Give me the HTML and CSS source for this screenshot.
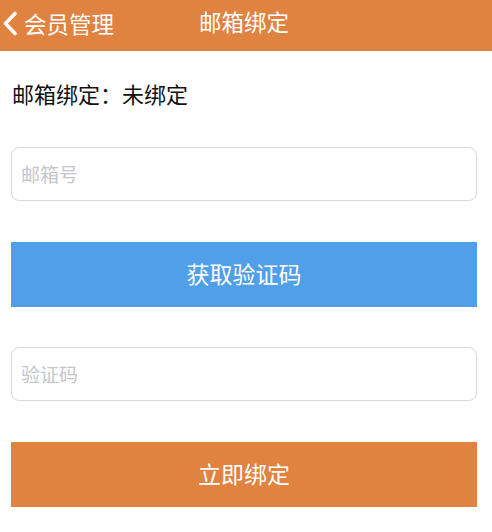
FILE: index.html
```html
<!DOCTYPE html>
<html lang="zh-CN">
<head>
<meta charset="utf-8">
<link rel="stylesheet" href="styles.css">
</head>
<body>
<header class="topbar">
  <a class="back">
    <svg class="back-icon" width="16" height="25" viewBox="0 0 16 25"><path d="M13 2.5 L3.5 12.5 L13 22.5" fill="none" stroke="#fff" stroke-width="3.6" stroke-linecap="round" stroke-linejoin="round"/></svg>
    <span>会员管理</span>
  </a>
  <h1 class="title">邮箱绑定</h1>
</header>
<main class="content">
  <p class="status">邮箱绑定：未绑定</p>
  <input class="field" type="text" placeholder="邮箱号">
  <button class="btn btn-blue">获取验证码</button>
  <input class="field field-code" type="text" placeholder="验证码">
  <button class="btn btn-orange">立即绑定</button>
</main>
</body>
</html>
```
FILE: styles.css
```css
* { box-sizing: border-box; }
body {
  margin: 0;
  background: #fff;
  font-family: "Noto Sans CJK SC", "Noto Sans", sans-serif;
}
.topbar {
  position: relative;
  height: 51px;
  background: #e08240;
  display: flex;
  align-items: center;
  color: #fff;
}
.back {
  display: flex;
  align-items: center;
  gap: 6px;
  padding-left: 2px;
  font-size: 22.5px;
  color: #fff;
  margin-top: -5px;
}
.back-icon { display: block; }
.title {
  position: absolute;
  left: 0;
  right: 0;
  top: 0;
  margin: 0;
  padding-right: 4px;
  text-align: center;
  font-weight: normal;
  font-size: 22.5px;
  line-height: 43px;
  pointer-events: none;
}
.content {
  padding: 0 15px 0 11px;
  display: flex;
  flex-direction: column;
}
.status {
  margin: 27px 0 0 1px;
  font-size: 22px;
  line-height: 30px;
  color: #111;
}
.field {
  margin-top: 39px;
  height: 54px;
  border: 1px solid #d9d9d9;
  border-radius: 8px;
  padding: 0 9px 2px;
  font-family: inherit;
  font-size: 19px;
  color: #333;
  outline: none;
}
.field::placeholder { color: #c6c6cb; }
.content .field + .btn { margin-top: 41px; }
.content .btn + .field { margin-top: 40px; }
.btn {
  height: 65px;
  border: none;
  font-family: inherit;
  font-size: 23px;
  color: #fff;
  padding: 0 0 4px;
}
.btn-blue { background: #509fe8; }
.btn-orange { background: #e08240; }
```
